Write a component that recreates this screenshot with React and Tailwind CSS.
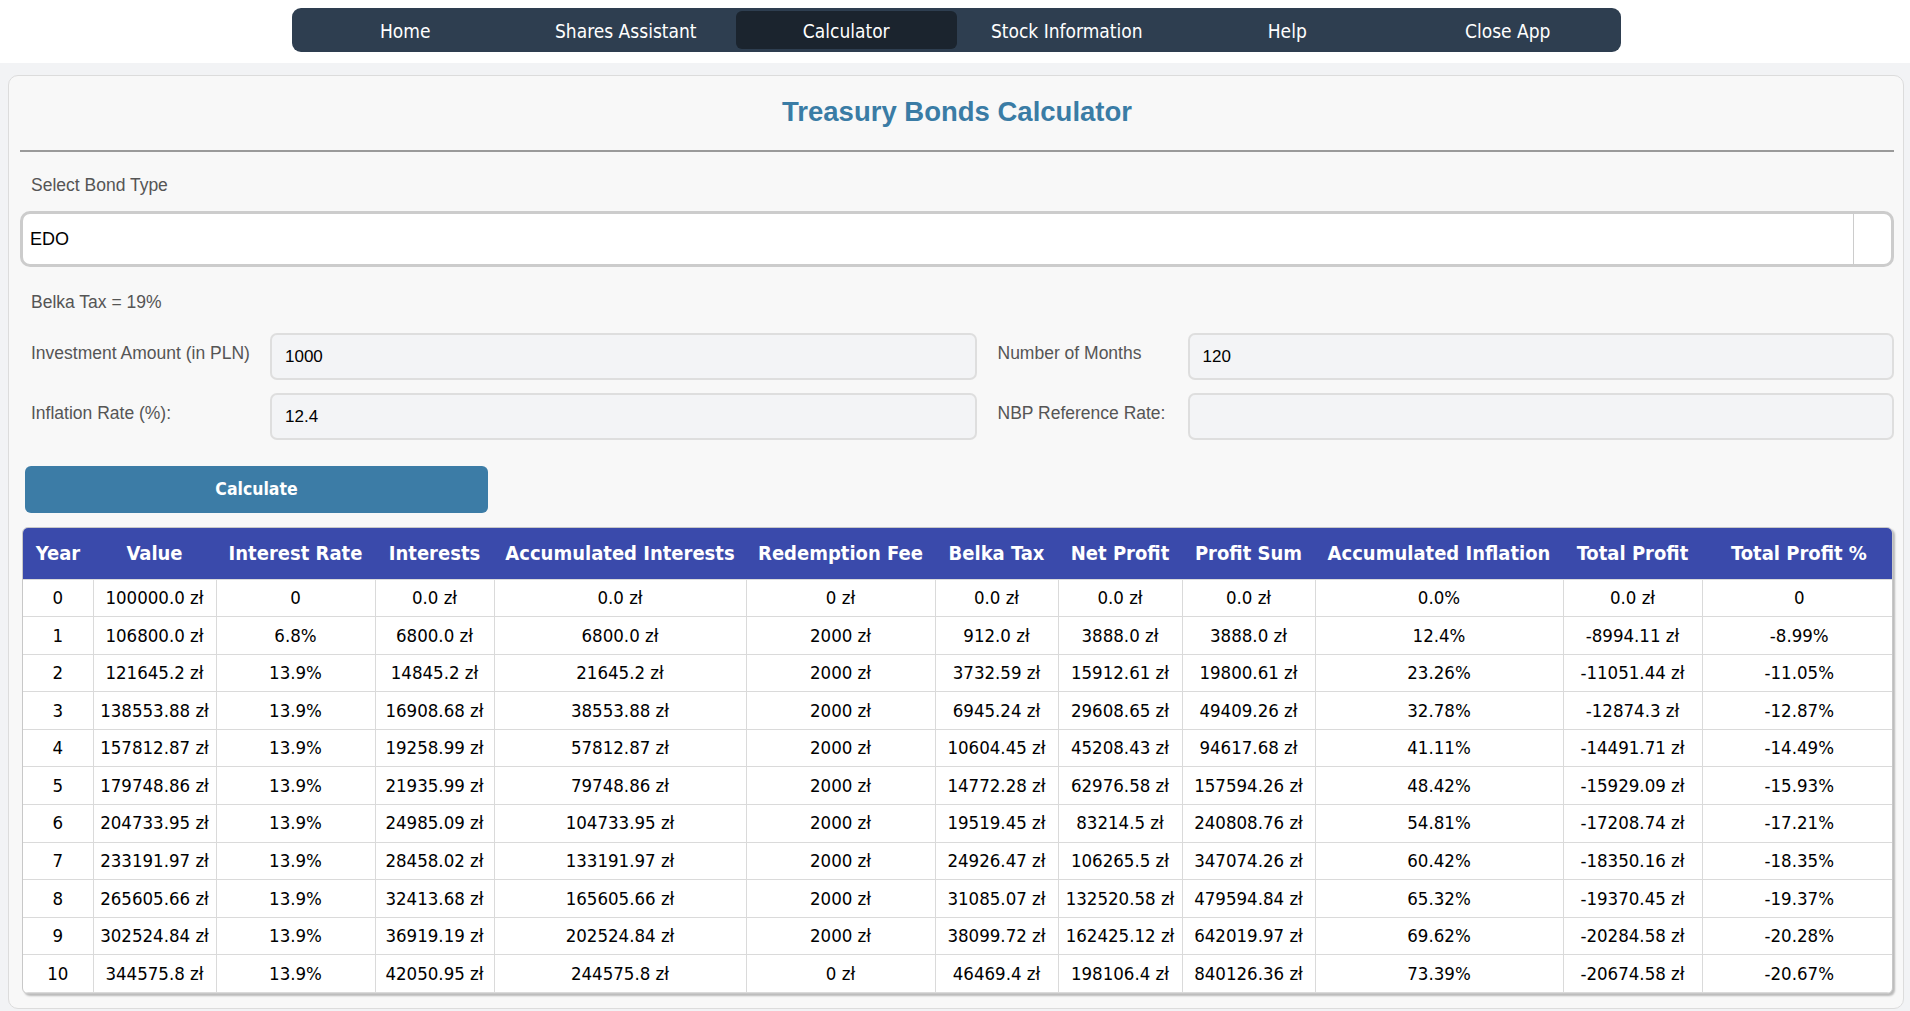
import React from "react";

// ===== Data =====
const navItems = ["Home", "Shares Assistant", "Calculator", "Stock Information", "Help", "Close App"];

const columns = [
    { title: "Year", w: "w-[70px]" },
    { title: "Value", w: "w-[123px]" },
    { title: "Interest Rate", w: "w-[159px]" },
    { title: "Interests", w: "w-[119px]" },
    { title: "Accumulated Interests", w: "w-[252px]" },
    { title: "Redemption Fee", w: "w-[189px]" },
    { title: "Belka Tax", w: "w-[123px]" },
    { title: "Net Profit", w: "w-[124px]" },
    { title: "Profit Sum", w: "w-[133px]" },
    { title: "Accumulated Inflation", w: "w-[248px]" },
    { title: "Total Profit", w: "w-[139px]" },
    { title: "Total Profit %", w: "w-[194px]" },
];

const rows = [
    ["0", "100000.0 zł", "0", "0.0 zł", "0.0 zł", "0 zł", "0.0 zł", "0.0 zł", "0.0 zł", "0.0%", "0.0 zł", "0"],
    ["1", "106800.0 zł", "6.8%", "6800.0 zł", "6800.0 zł", "2000 zł", "912.0 zł", "3888.0 zł", "3888.0 zł", "12.4%", "-8994.11 zł", "-8.99%"],
    ["2", "121645.2 zł", "13.9%", "14845.2 zł", "21645.2 zł", "2000 zł", "3732.59 zł", "15912.61 zł", "19800.61 zł", "23.26%", "-11051.44 zł", "-11.05%"],
    ["3", "138553.88 zł", "13.9%", "16908.68 zł", "38553.88 zł", "2000 zł", "6945.24 zł", "29608.65 zł", "49409.26 zł", "32.78%", "-12874.3 zł", "-12.87%"],
    ["4", "157812.87 zł", "13.9%", "19258.99 zł", "57812.87 zł", "2000 zł", "10604.45 zł", "45208.43 zł", "94617.68 zł", "41.11%", "-14491.71 zł", "-14.49%"],
    ["5", "179748.86 zł", "13.9%", "21935.99 zł", "79748.86 zł", "2000 zł", "14772.28 zł", "62976.58 zł", "157594.26 zł", "48.42%", "-15929.09 zł", "-15.93%"],
    ["6", "204733.95 zł", "13.9%", "24985.09 zł", "104733.95 zł", "2000 zł", "19519.45 zł", "83214.5 zł", "240808.76 zł", "54.81%", "-17208.74 zł", "-17.21%"],
    ["7", "233191.97 zł", "13.9%", "28458.02 zł", "133191.97 zł", "2000 zł", "24926.47 zł", "106265.5 zł", "347074.26 zł", "60.42%", "-18350.16 zł", "-18.35%"],
    ["8", "265605.66 zł", "13.9%", "32413.68 zł", "165605.66 zł", "2000 zł", "31085.07 zł", "132520.58 zł", "479594.84 zł", "65.32%", "-19370.45 zł", "-19.37%"],
    ["9", "302524.84 zł", "13.9%", "36919.19 zł", "202524.84 zł", "2000 zł", "38099.72 zł", "162425.12 zł", "642019.97 zł", "69.62%", "-20284.58 zł", "-20.28%"],
    ["10", "344575.8 zł", "13.9%", "42050.95 zł", "244575.8 zł", "0 zł", "46469.4 zł", "198106.4 zł", "840126.36 zł", "73.39%", "-20674.58 zł", "-20.67%"],
];

const tahoma = "font-['Tahoma','DejaVu_Sans_Condensed','DejaVu_Sans',sans-serif]";

// ===== Nav =====
const Nav = () => (
    <div className="bg-white h-[63px] pt-[8px]">
        <nav className={`ml-[292px] w-[1329px] h-[44px] bg-[#2e3e50] rounded-[9px] grid grid-cols-6 p-[3px] ${tahoma}`}>
            {navItems.map((item) => (
                <div
                    key={item}
                    className={`flex items-center justify-center text-white text-[19px] rounded-[6px] pt-[2px] ${
                        item === "Calculator" ? "bg-[#1b242e]" : ""
                    }`}
                >
                    {item}
                </div>
            ))}
        </nav>
    </div>
);

// ===== Form pieces =====
const Label = ({ w, children, className = "" }) => (
    <div className={`${w} shrink-0 pt-[7px] text-[17.5px] text-[#555] ${className}`}>{children}</div>
);

const Input = ({ value }) => (
    <div className="flex-1 h-[47px] bg-[#f3f4f6] border-2 border-[#dedede] rounded-[7px] flex items-center pl-[13px] text-[17px] text-black">
        {value}
    </div>
);

// ===== Results Table =====
const ResultsTable = () => (
    <div className="mt-[14px] ml-[2px] mr-[1px] rounded-[6px] overflow-hidden border border-[#c8c8c8] shadow-[2px_2px_2px_rgba(0,0,0,0.25)] bg-white">
        <table className={`w-full border-collapse table-fixed ${tahoma}`}>
            <thead>
                <tr className="bg-[#3a4aab] h-[51px]">
                    {columns.map((c) => (
                        <th key={c.title} className={`${c.w} text-white font-bold text-[20px] text-center whitespace-nowrap`}>
                            {c.title}
                        </th>
                    ))}
                </tr>
            </thead>
            <tbody>
                {rows.map((r, i) => (
                    <tr key={i} className="h-[37.6px]">
                        {r.map((cell, j) => (
                            <td
                                key={j}
                                className="border border-[#dadada] text-center text-[18.5px] text-black whitespace-nowrap first:border-l-0 last:border-r-0"
                            >
                                {cell}
                            </td>
                        ))}
                    </tr>
                ))}
            </tbody>
        </table>
    </div>
);

// ===== App =====
export default function App() {
    return (
        <div className="min-h-screen bg-[#f2f3f5] font-['Liberation_Sans',Arial,sans-serif]">
            <Nav />
            <div className="mt-[12px] mx-[8px] w-[1896px] bg-[#f8f8f8] border border-[#dcdcdc] rounded-[10px] pl-[11px] pr-[9px] pb-[14px]">
                <div className="h-[74px] flex items-center justify-center pb-[3px]">
                    <h1 className="text-[27.5px] font-bold text-[#3a7ca5]">Treasury Bonds Calculator</h1>
                </div>
                <div className="h-[2px] bg-[#9a9a9a]" />

                <div className="pl-[11px] pt-[23px] text-[17.5px] text-[#555] leading-[20px]">Select Bond Type</div>

                <div className="mt-[16px] h-[56px] bg-white border-[3px] border-[#cccccc] rounded-[10px] flex items-stretch">
                    <div className="flex-1 flex items-center pl-[7px] text-[18px] text-black">EDO</div>
                    <div className="w-[38px] border-l border-[#cccccc]" />
                </div>

                <div className="pl-[11px] pt-[25px] text-[17.5px] text-[#555] leading-[20px]">Belka Tax = 19%</div>

                <div className="pl-[11px] mt-[21px] flex">
                    <Label w="w-[239px]">Investment Amount (in PLN)</Label>
                    <Input value="1000" />
                    <Label w="w-[190px]" className="ml-[21px]">Number of Months</Label>
                    <Input value="120" />
                </div>
                <div className="pl-[11px] mt-[13px] flex">
                    <Label w="w-[239px]">Inflation Rate (%):</Label>
                    <Input value="12.4" />
                    <Label w="w-[190px]" className="ml-[21px]">NBP Reference Rate:</Label>
                    <Input value="" />
                </div>

                <button className={`mt-[26px] ml-[5px] w-[463px] h-[47px] bg-[#3c7ca6] rounded-[6px] text-white font-bold text-[17.5px] ${tahoma}`}>
                    Calculate
                </button>

                <ResultsTable />
            </div>
        </div>
    );
}
